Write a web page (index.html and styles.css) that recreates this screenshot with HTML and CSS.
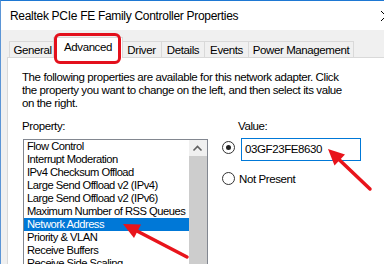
FILE: index.html
```html
<!DOCTYPE html>
<html>
<head>
<meta charset="utf-8">
<link rel="stylesheet" href="styles.css">
</head>
<body>
<div class="window">
  <div class="titlebar">
    <span class="title">Realtek PCIe FE Family Controller Properties</span>
    <svg class="close" width="12" height="12" viewBox="0 0 12 12"><path d="M1 1 L11 11 M11 1 L1 11" stroke="#000" stroke-width="1" fill="none"/></svg>
  </div>
  <div class="tabs">
    <div class="tab w-general">General</div>
    <div class="tab sel w-adv">Advanced</div>
    <div class="tab w-driver">Driver</div>
    <div class="tab w-details">Details</div>
    <div class="tab w-events">Events</div>
    <div class="tab w-power last">Power Management</div>
  </div>
  <div class="page">
    <p class="intro">The following properties are available for this network adapter. Click<br>the property you want to change on the left, and then select its value<br>on the right.</p>
    <div class="cols">
      <div class="leftcol">
        <div class="label">Property:</div>
        <div class="listbox">
          <ul class="items">
            <li>Flow Control</li>
            <li>Interrupt Moderation</li>
            <li>IPv4 Checksum Offload</li>
            <li>Large Send Offload v2 (IPv4)</li>
            <li>Large Send Offload v2 (IPv6)</li>
            <li>Maximum Number of RSS Queues</li>
            <li class="hl">Network Address</li>
            <li>Priority &amp; VLAN</li>
            <li>Receive Buffers</li>
            <li>Receive Side Scaling</li>
          </ul>
          <div class="scrollbar">
            <div class="sbtn"><svg width="17" height="17" viewBox="0 0 17 17"><path d="M4.5 10.5 L8.5 6.5 L12.5 10.5" stroke="#606060" stroke-width="1.6" fill="none"/></svg></div>
            <div class="thumb"></div>
          </div>
        </div>
      </div>
      <div class="rightcol">
        <div class="label vlabel">Value:</div>
        <div class="row">
          <span class="radio on"></span>
          <div class="textbox">03GF23FE8630</div>
        </div>
        <div class="row row2">
          <span class="radio"></span>
          <span class="rtext">Not Present</span>
        </div>
      </div>
    </div>
  </div>
  <div class="redbox"></div>
  <svg class="arrows" width="384" height="264" viewBox="0 0 384 264">
    <line x1="370" y1="189" x2="339" y2="159.5" stroke="#e8141b" stroke-width="3.5" stroke-linecap="round"/>
    <polygon points="328,149 345,154.5 334.5,165.5" fill="#e8141b"/>
    <line x1="187" y1="257" x2="137" y2="231" stroke="#e8141b" stroke-width="3.5" stroke-linecap="round"/>
    <polygon points="123,224 141,224.5 134,238" fill="#e8141b"/>
  </svg>
</div>
</body>
</html>
```
FILE: styles.css
```css
html, body {
  margin: 0;
  padding: 0;
  width: 384px;
  height: 264px;
  overflow: hidden;
  background: #f0f0f0;
}
body {
  font-family: "Liberation Sans", Arial, sans-serif;
  font-size: 11.5px;
  letter-spacing: -0.4px;
  color: #000;
}
.window {
  position: relative;
  width: 383px;
  height: 263px;
  border-top: 1px solid #1e78d3;
  border-left: 1px solid #5b95d6;
  background: #f0f0f0;
  overflow: hidden;
}
.titlebar {
  height: 29px;
  background: #fff;
  display: flex;
  align-items: center;
  padding-left: 9px;
}
.title {
  font-size: 12px;
  letter-spacing: -0.3px;
  flex: 1;
  white-space: nowrap;
}
.close {
  flex: none;
  margin-right: -8px;
}
.tabs {
  display: flex;
  align-items: flex-end;
  margin-top: 7px;
  padding-left: 8px;
  height: 20px;
  position: relative;
  z-index: 2;
}
.tab {
  height: 15px;
  line-height: 16px;
  border-top: 1px solid #d9d9d9;
  border-left: 1px solid #d9d9d9;
  background: #f0f0f0;
  text-align: center;
  white-space: nowrap;
}
.tab.last {
  border-right: 1px solid #d9d9d9;
}
.tab.sel {
  height: 20px;
  line-height: 18px;
  background: #fff;
  border: 1px solid #d9d9d9;
  border-bottom: none;
  margin: 0 -2px -1px -2px;
  position: relative;
  z-index: 3;
}
.w-general { width: 45px; }
.w-adv { width: 68px; }
.w-driver { width: 39px; }
.w-details { width: 42px; }
.w-events { width: 43px; }
.w-power { width: 104px; }
.page {
  margin-left: 6px;
  margin-right: -20px;
  height: 240px;
  background: #fff;
  border: 1px solid #d9d9d9;
  padding: 13px 0 0 14px;
}
.intro {
  margin: 0;
  line-height: 13px;
  white-space: nowrap;
}
.cols {
  display: flex;
  margin-top: 10px;
}
.label {
  line-height: 13px;
  height: 13px;
}
.listbox {
  margin-top: 6px;
  margin-left: 1px;
  width: 183px;
  height: 140px;
  border: 1px solid #828790;
  display: flex;
}
.items {
  list-style: none;
  margin: 0;
  padding: 0;
  flex: 1;
  min-width: 0;
}
.items li {
  height: 13px;
  line-height: 13px;
  padding-left: 3px;
  white-space: nowrap;
  font-size: 11.2px;
  letter-spacing: -0.5px;
  overflow: hidden;
}
.items li.hl {
  background: #0078d7;
  color: #fff;
}
.scrollbar {
  width: 18px;
  flex: none;
  display: flex;
  flex-direction: column;
  background: #f0f0f0;
}
.sbtn {
  height: 16px;
  background: #f0f0f0;
}
.sbtn svg { display: block; }
.thumb {
  flex: 1;
  background: #cdcdcd;
}
.rightcol {
  margin-left: 14px;
}
.vlabel {
  padding-left: 16px;
}
.row {
  display: flex;
  align-items: flex-start;
  margin-top: 5px;
}
.row .radio.on {
  margin-top: 3px;
}
.row2 {
  margin-top: 11px;
  align-items: center;
}
.radio {
  width: 11px;
  height: 11px;
  border: 1px solid #333;
  border-radius: 50%;
  background: #fff;
  position: relative;
  margin-right: 6px;
  flex: none;
}
.radio.on::after {
  content: "";
  position: absolute;
  left: 3px;
  top: 3px;
  width: 5px;
  height: 5px;
  border-radius: 50%;
  background: #222;
}
.textbox {
  width: 115px;
  height: 21px;
  line-height: 21px;
  border: 1px solid #0078d7;
  padding-left: 3px;
}
.rtext {
  margin-left: -2px;
}
.redbox {
  position: absolute;
  left: 53px;
  top: 32px;
  width: 61px;
  height: 25px;
  border: 3px solid #e3101c;
  border-radius: 6px;
  z-index: 5;
}
.arrows {
  position: absolute;
  left: -1px;
  top: -1px;
  z-index: 6;
}
```
